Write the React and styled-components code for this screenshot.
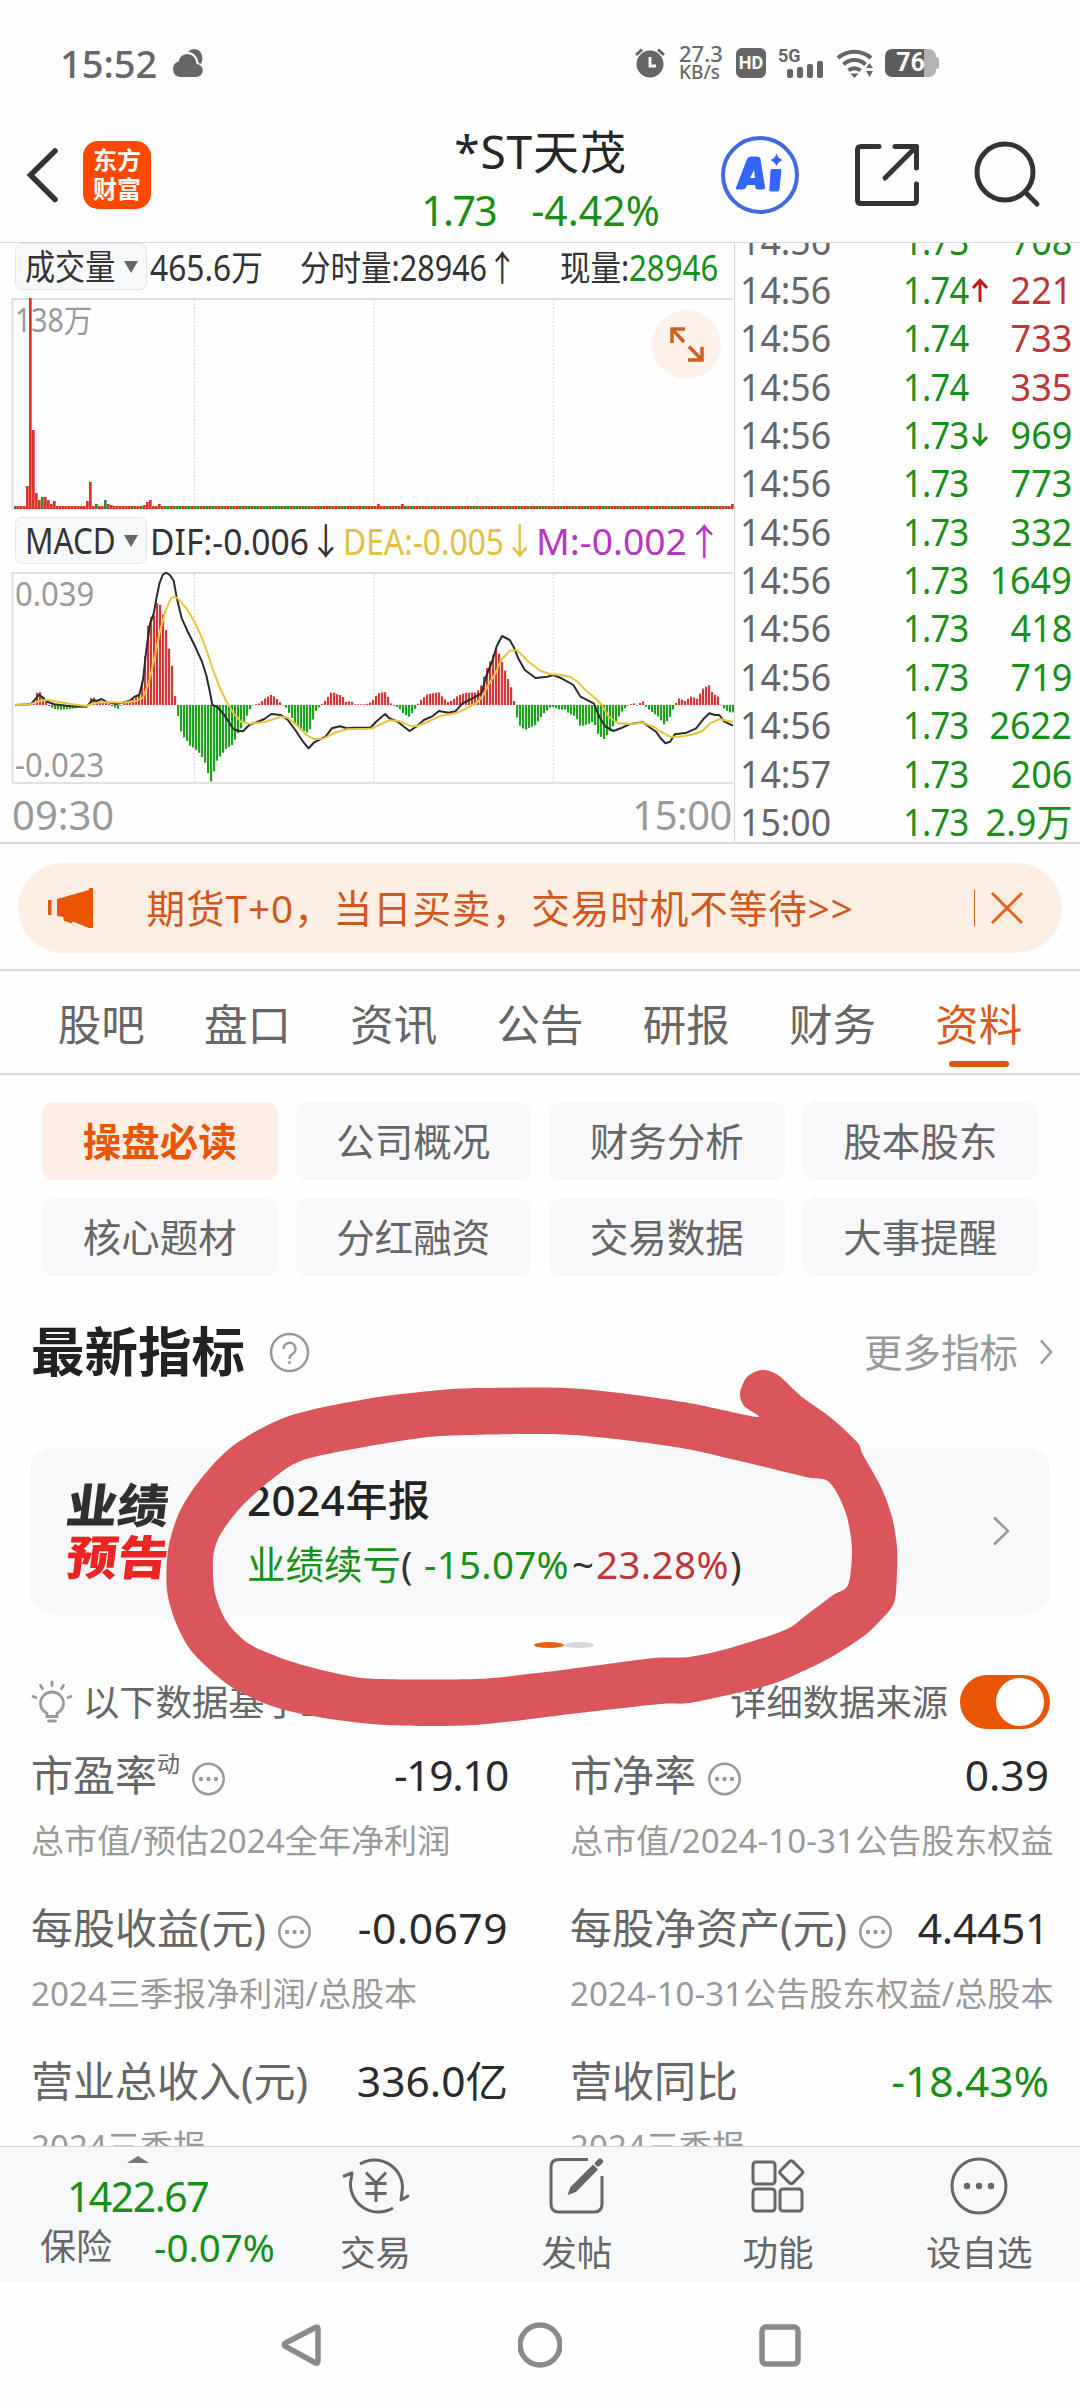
import React from "react";
import styled, { createGlobalStyle } from "styled-components";

const Global = createGlobalStyle`
  * { box-sizing: border-box; }
  body {
    margin: 0;
    background: #fff;
    font-family: "Noto Sans", "Noto Sans CJK SC", sans-serif;
    color: #333;
  }
  svg { display: block; flex: none; }
`;

const GREEN = "#189018";
const RED = "#bf3636";
const ORANGE = "#ea5504";

const Screen = styled.div`
  position: relative;
  width: 1080px;
  height: 2408px;
  overflow: hidden;
  background: #fefefe;
  display: flex;
  flex-direction: column;
`;

const T = styled.span`
  display: inline-block;
  white-space: nowrap;
  flex: none;
  line-height: 1;
  font-size: ${(p) => p.$s}px;
  color: ${(p) => p.$c || "#333"};
  font-weight: ${(p) => p.$b || 400};
  letter-spacing: ${(p) => p.$ls || 0}px;
  width: ${(p) => (p.$w ? p.$w + "px" : "auto")};
  transform: ${(p) => (p.$sx ? `scaleX(${p.$sx})` : "none")};
  transform-origin: ${(p) => p.$o || "left"} center;
  text-align: ${(p) => (p.$o === "right" ? "right" : "left")};
`;

/* ---------- status bar ---------- */
const StatusBar = styled.div`
  height: 108px;
  flex: none;
  padding: 18px 141px 0 60px;
  display: flex;
  align-items: center;
`;
const Spacer = styled.div`
  flex: 1;
`;
const Speed = styled.div`
  width: 44px;
  margin: 0 13px 0 14px;
  display: flex;
  flex-direction: column;
`;
const SpeedLine = styled.span`
  font-size: ${(p) => p.$s}px;
  line-height: 19px;
  font-weight: 500;
  color: #6a6a6a;
  white-space: nowrap;
`;
const HdBadge = styled.div`
  width: 30px;
  height: 30px;
  border-radius: 6px;
  background: #666;
  color: #fff;
  font: 700 18px/30px "Roboto", sans-serif;
  text-align: center;
`;
const Signal = styled.div`
  width: 46px;
  height: 30px;
  margin: 0 12px;
  display: flex;
  flex-direction: column;
`;
const SignalLabel = styled.span`
  font: 700 18px/15px "Roboto", sans-serif;
  color: #666;
`;
const Bars = styled.div`
  height: 15px;
  padding-left: 9px;
  display: flex;
  gap: 4px;
  align-items: flex-end;
`;
const Bar = styled.i`
  width: 6px;
  border-radius: 2px;
  background: #666;
  height: ${(p) => p.$h}px;
`;
const Battery = styled.div`
  display: flex;
  align-items: center;
  margin-left: 11px;
`;
const BatteryBody = styled.div`
  width: 51px;
  height: 28px;
  border-radius: 7px;
  background: linear-gradient(90deg, #5c5c5c 39px, #b3b3b3 39px);
  color: #fff;
  font: 700 25px/28px "Roboto", sans-serif;
  text-align: center;
`;
const BatteryNub = styled.i`
  width: 3px;
  height: 12px;
  background: #b3b3b3;
  border-radius: 0 3px 3px 0;
`;

/* ---------- header ---------- */
const Header = styled.header`
  height: 135px;
  flex: none;
  border-bottom: 1.5px solid #d6d6d8;
  display: flex;
  align-items: center;
  padding: 0 38px 0 25px;
`;
const Logo = styled.div`
  width: 68px;
  height: 68px;
  margin: 0 0 0 23px;
  border-radius: 15px;
  background: #ff4800;
  color: #fff;
  font-size: 24px;
  font-weight: 700;
  line-height: 29px;
  text-align: center;
  padding-top: 4px;
`;
const TitleBlock = styled.div`
  flex: 1;
  display: flex;
  flex-direction: column;
  align-items: center;
  padding: 9px 0 0 210px;
`;
const PriceRow = styled.div`
  display: flex;
  gap: 35px;
  margin-top: 16px;
`;
const HeaderIcons = styled.div`
  display: flex;
  align-items: center;
  gap: 54px;
`;

/* ---------- quotes ---------- */
const Quotes = styled.section`
  height: 601px;
  flex: none;
  display: flex;
  border-bottom: 2px solid #d9d9db;
`;
const Charts = styled.div`
  width: 735px;
  flex: none;
  border-right: 1.5px solid #d6d6d8;
  display: flex;
  flex-direction: column;
`;
const IndicatorRow = styled.div`
  height: ${(p) => p.$h}px;
  padding: ${(p) => p.$pt}px 0 0 15px;
  display: flex;
  align-items: flex-start;
`;
const IndicatorCells = styled.div`
  display: flex;
  height: 49px;
  align-items: center;
`;
const Picker = styled.div`
  width: 132px;
  height: 47px;
  border: 1px solid #e4e6e9;
  border-radius: 7px;
  background: #f7f8fa;
  display: flex;
  align-items: center;
  padding-left: 9px;
  margin-right: 3px;
`;
const Caret = styled.i`
  border-left: 7px solid transparent;
  border-right: 7px solid transparent;
  border-top: 12px solid #666;
`;
const Chart = styled.div`
  position: relative;
  height: 212px;
`;
const ChartTag = styled.div`
  position: absolute;
  left: 15px;
  top: ${(p) => p.$y}px;
`;
const ExpandButton = styled.div`
  position: absolute;
  left: 652px;
  top: 12px;
  width: 69px;
  height: 69px;
  border-radius: 50%;
  background: #fef1e9;
`;
const TimeAxis = styled.div`
  flex: 1;
  display: flex;
  justify-content: space-between;
  align-items: center;
  padding: 4px 2px 0 12px;
`;
const Ticks = styled.div`
  flex: 1;
  min-width: 0;
  overflow: hidden;
  display: flex;
  flex-direction: column;
  justify-content: flex-end;
  padding: 0 8px 0 5px;
`;
const Tick = styled.div`
  height: 48.4px;
  flex: none;
  display: grid;
  grid-template-columns: 163px 69px 22px minmax(0, 1fr);
  align-items: center;
  transform: translateY(4px);
`;
const Right = styled.div`
  display: flex;
  justify-content: flex-end;
`;

/* ---------- banner ---------- */
const BannerWrap = styled.div`
  height: 127px;
  flex: none;
  padding: 19px 18px 0;
  border-bottom: 2px solid #dadadc;
`;
const Banner = styled.div`
  height: 90px;
  border-radius: 45px;
  background: #fdeee4;
  display: flex;
  align-items: center;
  padding: 0 38px 0 29px;
`;
const Rule = styled.i`
  width: 1.5px;
  height: 36px;
  background: #cf6a35;
  margin-right: 15px;
`;

/* ---------- tabs ---------- */
const Tabs = styled.nav`
  height: 104px;
  flex: none;
  border-bottom: 2px solid #dadadc;
  display: flex;
  padding: 0 28px;
`;
const Tab = styled.div`
  flex: 1;
  display: flex;
  flex-direction: column;
  align-items: center;
  padding-top: 32px;
`;
const Underline = styled.i`
  width: 60px;
  height: 6px;
  margin-top: 14px;
  border-radius: 3px;
  background: #df560f;
`;

/* ---------- content ---------- */
const Content = styled.main`
  height: 1071px;
  flex: none;
  overflow: hidden;
`;
const Chips = styled.div`
  padding: 27px 42px 0;
  display: grid;
  grid-template-columns: repeat(4, 1fr);
  gap: 18px;
`;
const Chip = styled.div`
  height: 78px;
  border-radius: 12px;
  background: ${(p) => (p.$on ? "#ffeee5" : "#f8f8fa")};
  display: flex;
  align-items: center;
  justify-content: center;
`;
const SectionHead = styled.div`
  height: 60px;
  margin-top: 46px;
  padding: 0 27px 0 31px;
  display: flex;
  align-items: center;
  gap: 24px;
`;
const Card = styled.div`
  height: 168px;
  margin: 65px 30px 0;
  border-radius: 24px;
  background: #f8f8fa;
  display: flex;
  align-items: center;
  padding: 0 40px 0 37px;
`;
const Stamp = styled.div`
  width: 180px;
  display: flex;
  flex-direction: column;
  gap: 3px;
`;
const StampLine = styled.span`
  font-size: 51px;
  line-height: 49px;
  font-weight: 900;
  color: ${(p) => p.$c};
  transform: skewX(-7deg) scaleY(0.92);
`;
const CardText = styled.div`
  flex: 1;
  display: flex;
  flex-direction: column;
  gap: 24px;
`;
const Line = styled.div`
  display: flex;
  align-items: center;
`;
const Pager = styled.div`
  height: 6px;
  margin: 27px 0 0 48px;
  display: flex;
  justify-content: center;
`;
const Dot = styled.i`
  width: 30px;
  height: 6px;
  border-radius: 50%;
  background: ${(p) => p.$c};
`;
const Note = styled.div`
  height: 54px;
  margin-top: 27px;
  padding: 0 30px 0 31px;
  display: flex;
  align-items: center;
  gap: 10px;
`;
const Toggle = styled.div`
  width: 90px;
  height: 54px;
  margin-left: 2px;
  border-radius: 27px;
  background: ${ORANGE};
  padding: 3px 6px;
  display: flex;
  justify-content: flex-end;
`;
const Knob = styled.i`
  width: 48px;
  height: 48px;
  border-radius: 50%;
  background: #fff;
`;
const Metrics = styled.div`
  display: grid;
  grid-template-columns: 477px 479px;
  column-gap: 62px;
  padding: 13px 0 0 31px;
`;
const Metric = styled.div`
  height: 153px;
`;
const MetricTop = styled.div`
  height: 66px;
  display: flex;
  align-items: center;
`;
const Sup = styled.sup`
  font-size: 23px;
  line-height: 24px;
  color: #666;
  align-self: flex-start;
  margin-top: 9px;
`;
const More = styled.span`
  margin: 8px 0 0 12px;
`;
const MetricSub = styled.div`
  height: 66px;
  line-height: 66px;
  font-size: 33px;
  letter-spacing: 0.1px;
  color: #999;
  white-space: nowrap;
`;

/* ---------- bottom ---------- */
const BottomBar = styled.footer`
  height: 136px;
  flex: none;
  border-top: 1.5px solid #d0d3d6;
  background: #f7f8fa;
  display: flex;
`;
const IndexBox = styled.div`
  width: 275px;
  display: flex;
  flex-direction: column;
  align-items: center;
  padding-top: 9px;
`;
const UpMark = styled.i`
  border-left: 11px solid transparent;
  border-right: 11px solid transparent;
  border-bottom: 7px solid #77777b;
  margin-bottom: 13px;
`;
const IndexRow = styled.div`
  width: 275px;
  padding-left: 40px;
  display: flex;
  align-items: center;
  gap: 42px;
  margin-top: 11px;
`;
const Action = styled.div`
  flex: 1;
  display: flex;
  flex-direction: column;
  align-items: center;
  padding-top: 5px;
  gap: 15px;
`;
const SystemNav = styled.div`
  flex: 1;
  display: flex;
  justify-content: center;
  gap: 196px;
  padding-top: 38px;
`;
const Annotation = styled.svg`
  position: absolute;
  left: 0;
  top: 1360px;
  pointer-events: none;
`;

/* ---------- chart data ---------- */
const HIST = [[33,0],[70,5],[76,32],[82,44],[88,32],[95,15],[101,0],[107,-6],[118,-13],[130,-14],[160,-10],[185,-3],[190,12],[196,30],[203,12],[215,10],[230,4],[240,-6],[252,-12],[258,4],[270,8],[285,20],[297,32],[304,100],[311,200],[317,288],[323,240],[330,300],[336,312],[343,285],[349,250],[355,195],[361,145],[368,90],[372,0],[375,-10],[380,-62],[387,-95],[394,-100],[400,-120],[412,-130],[425,-148],[437,-180],[444,-225],[450,-233],[456,-175],[463,-160],[480,-130],[494,-118],[502,-90],[515,-60],[527,-20],[535,0],[550,5],[560,18],[576,32],[590,14],[598,0],[606,-8],[615,-30],[628,-60],[640,-75],[654,-85],[660,-60],[668,-20],[680,0],[690,14],[703,40],[715,32],[725,28],[735,5],[742,14],[752,2],[775,2],[788,10],[800,34],[815,40],[822,25],[830,0],[845,-8],[855,-26],[866,-36],[876,-20],[884,0],[890,12],[905,32],[930,38],[940,20],[950,8],[958,14],[970,28],[985,36],[1010,38],[1020,60],[1030,105],[1052,172],[1060,145],[1072,95],[1085,45],[1090,5],[1094,-30],[1100,-60],[1112,-75],[1135,-60],[1150,-28],[1168,-4],[1180,-10],[1188,-16],[1195,-10],[1205,-25],[1220,-35],[1230,-65],[1250,-55],[1258,-48],[1268,-90],[1280,-102],[1292,-80],[1305,-50],[1320,-15],[1332,0],[1343,5],[1350,0],[1362,12],[1370,-8],[1385,-25],[1395,-35],[1408,-60],[1420,-35],[1430,0],[1438,20],[1452,12],[1465,26],[1478,18],[1488,48],[1502,60],[1510,35],[1522,25],[1528,0],[1535,-12],[1545,-22],[1556,-22]];
const DIF = [[33,465],[65,463],[76,445],[82,434],[90,442],[100,455],[115,463],[150,469],[183,470],[190,460],[197,450],[205,453],[215,447],[225,455],[245,462],[260,458],[275,452],[285,440],[295,435],[303,390],[310,300],[318,220],[326,190],[332,140],[338,100],[345,74],[352,68],[360,75],[368,92],[374,140],[385,205],[398,245],[412,285],[428,335],[437,375],[444,420],[450,465],[460,470],[475,495],[495,538],[505,542],[515,544],[528,525],[545,516],[560,507],[575,492],[595,495],[610,510],[628,545],[642,575],[654,595],[665,578],[690,560],[703,535],[720,529],[735,535],[750,533],[785,533],[797,515],[816,492],[825,505],[843,515],[856,530],[868,543],[882,530],[898,510],[915,500],[930,483],[950,488],[965,484],[980,460],[1000,446],[1020,430],[1030,380],[1045,325],[1052,290],[1064,258],[1080,270],[1090,295],[1098,325],[1112,360],[1135,384],[1160,380],[1172,375],[1190,385],[1215,405],[1230,440],[1258,460],[1270,500],[1283,530],[1300,543],[1315,535],[1335,522],[1362,517],[1375,530],[1390,545],[1400,565],[1410,580],[1420,575],[1430,553],[1455,548],[1475,535],[1490,508],[1503,490],[1515,495],[1524,495],[1535,515],[1553,527]];
const DEA = [[33,465],[65,463],[85,453],[100,449],[125,456],[150,462],[183,468],[200,459],[230,456],[260,458],[290,452],[303,443],[315,400],[328,320],[338,250],[350,185],[362,145],[370,140],[378,147],[395,175],[412,215],[430,270],[440,310],[450,355],[465,410],[480,455],[495,490],[510,515],[530,521],[560,517],[595,500],[610,503],[630,527],[650,555],[665,567],[685,566],[710,548],[735,538],[785,536],[800,528],[825,511],[845,513],[868,527],[885,528],[910,513],[935,497],[965,490],[985,478],[1010,458],[1022,440],[1035,405],[1050,370],[1062,330],[1080,302],[1095,300],[1120,335],[1145,362],[1165,372],[1190,375],[1210,382],[1225,397],[1240,420],[1262,445],[1275,465],[1290,500],[1310,520],[1335,522],[1362,518],[1385,530],[1400,545],[1420,560],[1440,560],[1470,553],[1488,543],[1505,520],[1525,507],[1553,516]];
const KX = 2.119;
const STEP = 3;

const lerp = (pts, x) => {
  for (let i = 1; i < pts.length; i++) {
    if (x <= pts[i][0]) {
      const [x0, y0] = pts[i - 1];
      const [x1, y1] = pts[i];
      return y0 + ((y1 - y0) * (x - x0)) / (x1 - x0);
    }
  }
  return 0;
};
const line = (pts) => pts.map(([x, y]) => `${(x / KX).toFixed(1)},${((y - 66) / 3).toFixed(1)}`).join(" ");
const smooth = (p) => {
  const n = p.length;
  let d = `M${p[0]}`;
  for (let i = 0; i < n; i++) {
    const a = p[(i - 1 + n) % n], b = p[i], c = p[(i + 1) % n], e = p[(i + 2) % n];
    const k = 7;
    d += `C${b[0] + (c[0] - a[0]) / k},${b[1] + (c[1] - a[1]) / k} ${c[0] - (e[0] - b[0]) / k},${c[1] - (e[1] - b[1]) / k} ${c[0]},${c[1]}`;
  }
  return d + "Z";
};

const SPIKES = { 4: [23, 0], 5: [211, 0], 6: [79, 0], 7: [16, 0], 8: [9, 0], 9: [12, 1], 10: [12, 0], 11: [9, 0], 12: [5, 0], 13: [8, 0], 24: [8, 0], 25: [27, 0], 27: [5, 1], 30: [9, 1], 31: [5, 0], 32: [4, 0], 43: [4, 0], 44: [7, 0], 45: [9, 0], 48: [5, 0], 121: [5, 0], 129: [5, 0], 239: [5, 0] };

const Grid = () => (
  <>
    <path d="M12.5 0V211M12 1H733" stroke="#dedede" strokeWidth="2" fill="none" />
    <path d="M194.500 2V210M374 2V210M553.500 2V210" stroke="#d9d9d9" strokeWidth="1.200" strokeDasharray="2 1.500" />
  </>
);

const VolumeChart = () => (
  <svg width="734" height="212">
    <Grid />
    <path d="M12 211H733" stroke="#dedede" strokeWidth="1.500" />
    {Array.from({ length: 240 }, (_, i) => {
      const s = SPIKES[i];
      const h = s ? s[0] : 3;
      const g = s ? s[1] : i === 0 || (i > 37 && (i * 37) % 11 < 4) || (i > 50 && i < 100 && i % 3 === 0);
      return <rect key={i} x={14 + i * STEP} y={211 - h} width="2.700" height={h} fill={g ? "#2f8a2a" : "#dd302c"} />;
    })}
  </svg>
);

const MacdChart = () => (
  <svg width="734" height="212">
    <Grid />
    <path d="M12 211H733" stroke="#e2e2e2" strokeWidth="2" />
    {Array.from({ length: 240 }, (_, i) => {
      const x = 16 + i * STEP;
      const v = lerp(HIST, x * KX) / 3;
      return (
        <rect key={i} x={x - 1} y={v > 0 ? 133 - v : 133} width="2.200" height={Math.max(Math.abs(v), 0.6)} fill={v >= 0 ? "#cf3a38" : "#1fa01f"} />
      );
    })}
    <polyline points={line(DIF)} fill="none" stroke="#2b2b2b" strokeWidth="2" strokeLinejoin="round" />
    <polyline points={line(DEA)} fill="none" stroke="#e8c53c" strokeWidth="2" strokeLinejoin="round" />
  </svg>
);

const OUTER = [[762,1370],[778,1375],[802,1397],[830,1417],[857,1442],[863,1455],[881,1487],[892,1517],[897,1547],[897,1573],[894,1603],[878,1623],[861,1638],[826,1660],[778,1682],[737,1693],[689,1703],[661,1704],[579,1713],[475,1725],[386,1725],[324,1718],[275,1707],[230,1686],[193,1653],[176,1623],[167,1590],[168,1550],[179,1513],[200,1480],[234,1445],[289,1416],[372,1398],[441,1390],[482,1388],[565,1388],[620,1393],[689,1403],[757,1417],[744,1406],[740,1393],[747,1377]];
const INNER = [[826,1480],[806,1477],[744,1462],[675,1447],[572,1435],[468,1435],[413,1439],[310,1458],[275,1477],[241,1507],[219,1537],[213,1560],[215,1593],[227,1622],[251,1645],[296,1663],[344,1675],[379,1679],[475,1679],[537,1673],[585,1667],[654,1658],[689,1657],[730,1648],[785,1630],[809,1613],[833,1595],[848,1585],[852,1550],[847,1517],[837,1493]];

const TICKS = [
  ["14:56", "1.73", "", "708", GREEN],
  ["14:56", "1.74", "↑", "221", RED],
  ["14:56", "1.74", "", "733", RED],
  ["14:56", "1.74", "", "335", RED],
  ["14:56", "1.73", "↓", "969", GREEN],
  ["14:56", "1.73", "", "773", GREEN],
  ["14:56", "1.73", "", "332", GREEN],
  ["14:56", "1.73", "", "1649", GREEN],
  ["14:56", "1.73", "", "418", GREEN],
  ["14:56", "1.73", "", "719", GREEN],
  ["14:56", "1.73", "", "2622", GREEN],
  ["14:57", "1.73", "", "206", GREEN],
  ["15:00", "1.73", "", "2.9万", GREEN],
];

const METRICS = [
  ["市盈率", "动", true, "-19.10", "总市值/预估2024全年净利润", -1.4],
  ["市净率", "", true, "0.39", "总市值/2024-10-31公告股东权益", 0],
  ["每股收益(元)", "", true, "-0.0679", "2024三季报净利润/总股本", 0.5],
  ["每股净资产(元)", "", true, "4.4451", "2024-10-31公告股东权益/总股本", -0.3],
  ["营业总收入(元)", "", false, "336.0亿", "2024三季报", 0],
  ["营收同比", "", false, "-18.43%", "2024三季报", 0, GREEN],
];

const Chevron = ({ w, h }) => (
  <svg width={w} height={h} viewBox={`0 0 ${w} ${h}`} fill="none" stroke="#999" strokeWidth="2.500">
    <path d={`M2 1.500L${w - 2} ${h / 2}L2 ${h - 1.5}`} />
  </svg>
);

const ARROWS = {
  "↑": <svg width="16" height="24" fill="none" stroke="#c01818" strokeWidth="3"><path d="M8 24V3M1 10L8 2.500L15 10" /></svg>,
  "↓": <svg width="16" height="24" fill="none" stroke={GREEN} strokeWidth="3"><path d="M8 0V21M1 14L8 21.500L15 14" /></svg>,
};

export default function App() {
  return (
    <Screen>
      <Global />
      <StatusBar>
        <T $s={38} $b={500} $c="#666" $w={112}>15:52</T>
        <svg width="32" height="30" viewBox="0 0 32 30" fill="#666">
          <path d="M8 29a8 8 0 0 1-1.500-15.500A9.500 9.500 0 0 1 15 6c5 0 9 4 9.500 10A6.500 6.500 0 0 1 24 29z" />
          <path d="M16 4a8 8 0 0 1 13 1c2 4 1.500 8 0 11l-2.500-1C26 9 22 4.500 16 4z" />
        </svg>
        <Spacer />
        <svg width="30" height="30" viewBox="0 0 30 30">
          <circle cx="15" cy="16" r="13.500" fill="#666" />
          <path d="M1 7L7 1.500M29 7L23 1.500" stroke="#666" strokeWidth="3" />
          <path d="M15 9v9h6" stroke="#fff" strokeWidth="2.800" fill="none" />
        </svg>
        <Speed>
          <SpeedLine $s={22}>27.3</SpeedLine>
          <SpeedLine $s={19}>KB/s</SpeedLine>
        </Speed>
        <HdBadge>HD</HdBadge>
        <Signal>
          <SignalLabel>5G</SignalLabel>
          <Bars><Bar $h={9} /><Bar $h={11} /><Bar $h={14} /><Bar $h={17} /></Bars>
        </Signal>
        <svg width="38" height="30" viewBox="0 0 38 30" fill="none" stroke="#666" strokeWidth="4">
          <path d="M2 10a25 25 0 0 1 33 0M7.500 16.500a16 16 0 0 1 22 0M12.500 22.500a9 9 0 0 1 12 0" />
          <path d="M14.500 25.500h8L18.500 30zM30 20h7l-3.500-5zM30 23h7l-3.500 6z" fill="#666" stroke="none" />
        </svg>
        <Battery>
          <BatteryBody>76</BatteryBody>
          <BatteryNub />
        </Battery>
      </StatusBar>

      <Header>
        <svg width="35" height="58" viewBox="0 0 35 58" fill="none" stroke="#333" strokeWidth="5.500" strokeLinecap="round">
          <path d="M30 5L5.500 29L30 53.500" />
        </svg>
        <Logo>东方<br />财富</Logo>
        <TitleBlock>
          <T $s={46} $c="#262626" $ls={0.9}>*ST天茂</T>
          <PriceRow>
            <T $s={41} $c={GREEN} $ls={-1.6}>1.73</T>
            <T $s={41} $c={GREEN}>-4.42%</T>
          </PriceRow>
        </TitleBlock>
        <HeaderIcons>
          <svg width="80" height="80" viewBox="0 0 80 80">
            <circle cx="40" cy="40" r="37" fill="none" stroke="#4169e1" strokeWidth="4" />
            <path fillRule="evenodd" d="M27 24Q28 21.500 31 21.500H37Q40 21.500 40.500 24L45 52Q45.500 54.500 43 54.500H37Q35.500 54.500 35.300 52L35 50H27L26 52.500Q25 54.500 23 54.500H17Q15 54 16.500 51.500zM30 43H35L34 35z" fill="#3366ff" />
            <path d="M52 34H60Q61.500 34 61.300 36L59.500 54Q59 56.500 57 56.500H51Q49 56.500 49.300 54L50.500 36Q50.700 34 52 34zM56.500 18.500Q58 23.500 62.500 25Q58 27 56.500 31Q55 27 50.500 25Q55 23.500 56.500 18.500z" fill="#3366ff" />
          </svg>
          <svg width="66" height="66" viewBox="0 0 66 66" fill="none" stroke="#333" strokeWidth="5" strokeLinecap="round" strokeLinejoin="round">
            <path d="M25 4.500H7Q3.500 4.500 3.500 8V58Q3.500 61.500 7 61.500H59Q62.500 61.500 62.500 58V42" />
            <path d="M41 4.500H62.500V26M60 7L31 36" />
          </svg>
          <svg width="68" height="68" viewBox="0 0 68 68" fill="none" stroke="#333" strokeWidth="5" strokeLinecap="round">
            <circle cx="31" cy="31" r="28" />
            <path d="M51 51L63 63" />
          </svg>
        </HeaderIcons>
      </Header>

      <Quotes>
        <Charts>
          <IndicatorRow $h={55} $pt={0}>
            <Picker>
              <T $s={35} $sx={0.86} $w={99}>成交量</T>
              <Caret />
            </Picker>
            <IndicatorCells>
              <T $s={35.5} $sx={0.895} $w={150}>465.6万</T>
              <T $s={35.5} $sx={0.86} $w={260}>分时量:28946↑</T>
              <T $s={35.5} $sx={0.86} $w={69}>现量:</T>
              <T $s={35.5} $sx={0.88} $w={95} $c={GREEN}>28946</T>
            </IndicatorCells>
          </IndicatorRow>
          <Chart>
            <VolumeChart />
            <ChartTag $y={6}><T $s={32} $sx={0.89} $c="#999">138万</T></ChartTag>
            <ExpandButton>
              <svg width="69" height="69" viewBox="0 0 69 69" fill="none" stroke="#cc6020" strokeWidth="3.500">
                <path d="M33 19H20V33M20.500 19.500L32 32M50 37V50H36M49.500 49.500L37 36.500" />
              </svg>
            </ExpandButton>
          </Chart>
          <IndicatorRow $h={62} $pt={7}>
            <Picker>
              <T $s={36.5} $sx={0.86} $w={99}>MACD</T>
              <Caret />
            </Picker>
            <IndicatorCells>
              <T $s={36.5} $sx={0.92} $w={193}>DIF:-0.006↓</T>
              <T $s={36.5} $sx={0.87} $w={193} $c="#e3c043">DEA:-0.005↓</T>
              <T $s={36.5} $sx={1.02} $w={150} $c="#b836c4">M:-0.002</T>
              <T $s={36.5} $c="#b836c4">↑</T>
            </IndicatorCells>
          </IndicatorRow>
          <Chart>
            <MacdChart />
            <ChartTag $y={6}><T $s={32} $sx={0.97} $c="#999">0.039</T></ChartTag>
            <ChartTag $y={177}><T $s={32} $sx={0.97} $c="#999">-0.023</T></ChartTag>
          </Chart>
          <TimeAxis>
            <T $s={40} $c="#999">09:30</T>
            <T $s={40} $c="#999" $ls={-0.5}>15:00</T>
          </TimeAxis>
        </Charts>
        <Ticks>
          {TICKS.map(([t, p, a, v, c], i) => (
            <Tick key={i}>
              <T $s={37.5} $sx={0.95} $c="#666">{t}</T>
              <T $s={37.5} $sx={0.92} $ls={-0.8} $c={GREEN}>{p}</T>
              <span>{ARROWS[a]}</span>
              <Right><T $s={37.5} $sx={0.96} $o="right" $c={c}>{v}</T></Right>
            </Tick>
          ))}
        </Ticks>
      </Quotes>

      <BannerWrap>
        <Banner>
          <svg width="48" height="40" viewBox="0 0 48 40" fill={ORANGE}>
            <path d="M1 12h3.500v15H1zM10 11L42 2V0h4v40h-4l-16-6.500-1.500 2-8-3V29L10 28z" />
          </svg>
          <Spacer />
          <T $s={38.6} $c="#d0581a" $ls={0.95} $w={827}>期货T+0，当日买卖，交易时机不等待&gt;&gt;</T>
          <Rule />
          <svg width="34" height="32" viewBox="0 0 34 32" stroke="#e2641f" strokeWidth="3">
            <path d="M2 1L32 31M32 1L2 31" />
          </svg>
        </Banner>
      </BannerWrap>

      <Tabs>
        {["股吧", "盘口", "资讯", "公告", "研报", "财务", "资料"].map((t, i) => (
          <Tab key={t}>
            <T $s={43.5} $c={i === 6 ? "#dd5a16" : "#666"}>{t}</T>
            {i === 6 && <Underline />}
          </Tab>
        ))}
      </Tabs>

      <Content>
        <Chips>
          {["操盘必读", "公司概况", "财务分析", "股本股东", "核心题材", "分红融资", "交易数据", "大事提醒"].map((t, i) => (
            <Chip key={t} $on={i === 0}>
              <T $s={38.5} $b={i === 0 ? 700 : 400} $c={i === 0 ? ORANGE : "#666"}>{t}</T>
            </Chip>
          ))}
        </Chips>
        <SectionHead>
          <T $s={53.5} $b={700} $c="#222">最新指标</T>
          <svg width="41" height="41" viewBox="0 0 41 41" fill="none" stroke="#999" strokeWidth="2.500">
            <circle cx="20.500" cy="20.500" r="18.500" />
            <path d="M14.500 17a6 6 0 1 1 9 5q-3 1.800-3 5" />
            <path d="M20.500 29.300v2.500" />
          </svg>
          <Spacer />
          <T $s={38.5} $c="#999" $w={151}>更多指标</T>
          <Chevron w={14} h={26} />
        </SectionHead>

        <Card>
          <Stamp>
            <StampLine $c="#303030">业绩</StampLine>
            <StampLine $c="#ee2424">预告</StampLine>
          </Stamp>
          <CardText>
            <T $s={42} $b={500} $c="#222" $ls={0.6}>2024年报</T>
            <Line>
              <T $s={38.5} $c={GREEN}>业绩续亏</T>
              <T $s={38.5} $w={23}>(</T>
              <T $s={38.5} $c={GREEN} $w={148} $ls={0.3}>-15.07%</T>
              <T $s={38.5} $w={24}>~</T>
              <T $s={38.5} $c={RED} $w={134} $ls={0.4}>23.28%</T>
              <T $s={38.5}>)</T>
            </Line>
          </CardText>
          <Chevron w={18} h={30} />
        </Card>
        <Pager><Dot $c="#ea6013" /><Dot $c="#d6d8dd" /></Pager>

        <Note>
          <svg width="42" height="44" viewBox="0 0 42 44" fill="none" stroke="#999" strokeWidth="2.800" strokeLinecap="round">
            <path d="M16 36.500V33.500C12 31 9.500 27.500 9.500 23.500a11.500 11.500 0 0 1 23 0c0 4-2.500 7.500-6.500 10v3zM17.500 41h7M21 2v3.500M9.500 5.500l2 3M32.500 5.500l-2 3M2 16.500l3 1M40 16.500l-3 1" />
          </svg>
          <T $s={36.3} $c="#666">以下数据基于2024三季报</T>
          <Spacer />
          <T $s={36.3} $c="#666">详细数据来源</T>
          <Toggle><Knob /></Toggle>
        </Note>

        <Metrics>
          {METRICS.map(([label, sup, more, value, sub, ls, c]) => (
            <Metric key={label}>
              <MetricTop>
                <T $s={42} $c="#666">{label}</T>
                {sup && <Sup>{sup}</Sup>}
                {more && (
                  <More>
                    <svg width="33" height="34" viewBox="0 0 33 34" fill="#999">
                      <circle cx="16.500" cy="17" r="15.200" fill="none" stroke="#999" strokeWidth="2.500" />
                      <circle cx="9" cy="17" r="2.200" />
                      <circle cx="16.500" cy="17" r="2.200" />
                      <circle cx="24" cy="17" r="2.200" />
                    </svg>
                  </More>
                )}
                <Spacer />
                <T $s={42.5} $c={c || "#2b2b2b"} $ls={ls}>{value}</T>
              </MetricTop>
              <MetricSub>{sub}</MetricSub>
            </Metric>
          ))}
        </Metrics>
      </Content>

      <BottomBar>
        <IndexBox>
          <UpMark />
          <T $s={41} $c={GREEN} $ls={-1.5}>1422.67</T>
          <IndexRow>
            <T $s={36} $c="#666">保险</T>
            <T $s={38.5} $c={GREEN}>-0.07%</T>
          </IndexRow>
        </IndexBox>
        <Action>
          <svg width="68" height="68" viewBox="0 0 68 68" fill="none" stroke="#666" strokeWidth="3" strokeLinejoin="round">
            <path d="M18 12A28 28 0 0 1 60.500 36L59 48L67 43.500M51 56A28 28 0 0 1 8.500 31L10 21L1 24.500" />
            <path d="M24 20.500L34 31L44 20.500M34 31V50M23.500 31.500H44.500M23.500 41.500H44.500" />
          </svg>
          <T $s={35.5} $c="#666">交易</T>
        </Action>
        <Action>
          <svg width="68" height="68" viewBox="0 0 68 68" fill="none" stroke="#666" strokeWidth="3">
            <path d="M45 7.500H16Q8 7.500 8 15V52Q8 60 16 60H51Q59 60 59 52V24" />
            <path d="M24.500 43l3-8L50 12.500l5 5L33 40z" fill="#666" stroke="none" />
            <path d="M55 11.500L57 9.500" strokeWidth="6" strokeLinecap="round" />
          </svg>
          <T $s={35.5} $c="#666">发帖</T>
        </Action>
        <Action>
          <svg width="68" height="68" viewBox="0 0 68 68" fill="none" stroke="#666" strokeWidth="3" strokeLinejoin="round">
            <rect x="9" y="10" width="22" height="22" rx="3" />
            <rect x="9" y="37" width="22" height="22" rx="3" />
            <rect x="36" y="37" width="22" height="22" rx="3" />
            <rect x="38.500" y="11.500" width="17.500" height="17.500" rx="2.500" transform="rotate(45 47.250 20.250)" />
          </svg>
          <T $s={35.5} $c="#666">功能</T>
        </Action>
        <Action>
          <svg width="68" height="68" viewBox="0 0 68 68" fill="#666">
            <circle cx="34" cy="34" r="27" fill="none" stroke="#666" strokeWidth="3" />
            <circle cx="22" cy="34" r="3.200" />
            <circle cx="34" cy="34" r="3.200" />
            <circle cx="46" cy="34" r="3.200" />
          </svg>
          <T $s={35.5} $c="#666">设自选</T>
        </Action>
      </BottomBar>

      <SystemNav>
        {[
          <path d="M37.500 7.500L7.500 23Q5 24.500 7.500 26.500L37.500 43Q40 44 40 41V9Q40 6 37.500 7.500z" />,
          <circle cx="22" cy="25" r="20" />,
          <rect x="4" y="7" width="36" height="37" rx="4" />,
        ].map((shape, i) => (
          <svg key={i} width="44" height="50" viewBox="0 0 44 50" fill="none" stroke="#8a8a8a" strokeWidth="5.500">{shape}</svg>
        ))}
      </SystemNav>

      <Annotation width="1080" height="380" viewBox="0 1360 1080 380">
        <path d={smooth(OUTER) + smooth(INNER)} fill="#db565b" fillRule="evenodd" />
      </Annotation>
    </Screen>
  );
}
